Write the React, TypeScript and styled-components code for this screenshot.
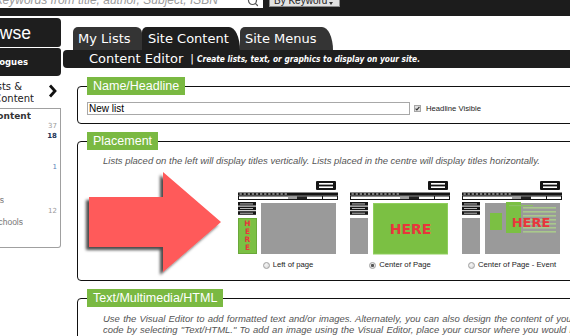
import React from 'react';
import styled, { createGlobalStyle } from 'styled-components';
import { Search } from 'lucide-react';

const GlobalStyle = createGlobalStyle`
  html, body {
    margin: 0;
    padding: 0;
    background: #fff;
  }
  body {
    font-family: 'Liberation Sans', Arial, sans-serif;
  }
`;

const Page = styled.div`
  width: 570px;
  height: 336px;
  overflow: hidden;
  display: flex;
  flex-direction: column;
  background: #fff;
`;

/* ---------- top search strip ---------- */

const TopBar = styled.header`
  height: 16px;
  flex-shrink: 0;
  background: #1c1c1c;
  display: flex;
  align-items: flex-start;
  overflow: hidden;
`;

const SearchField = styled.div`
  width: 263px;
  height: 8px;
  flex-shrink: 0;
  box-sizing: border-box;
  padding-right: 4px;
  background: #fff;
  display: flex;
  justify-content: flex-end;
  align-items: flex-end;
  overflow: hidden;
`;

const SearchText = styled.span`
  font: italic 12px/12px 'Liberation Sans', Arial, sans-serif;
  color: #9a9a9a;
  white-space: nowrap;
  margin-bottom: 2px;
`;

const SearchIcon = styled(Search)`
  flex-shrink: 0;
  margin: 0 0 1.5px 29px;
  color: #555;
`;

const KeywordSelect = styled.div`
  width: 71px;
  height: 7px;
  margin-left: 6px;
  box-sizing: border-box;
  padding-left: 4px;
  background: #e2e2e2;
  border: 1px solid #8a8a8a;
  border-top: none;
  display: flex;
  align-items: flex-end;
  overflow: hidden;
`;

const KeywordText = styled.span`
  font: 10px/10px 'Liberation Sans', Arial, sans-serif;
  color: #222;
  white-space: nowrap;
  margin-bottom: 0.5px;
`;

const Caret = styled.span`
  margin: 0 6px 1px auto;
  width: 0;
  height: 0;
  border-left: 2px solid transparent;
  border-right: 2px solid transparent;
  border-top: 3px solid #333;
`;

/* ---------- body ---------- */

const Body = styled.div`
  flex: 1;
  min-height: 0;
  display: flex;
  gap: 2px;
  margin-top: 2px;
`;

const Sidebar = styled.aside`
  width: 61px;
  flex-shrink: 0;
  display: flex;
  flex-direction: column;
`;

/* text in the sidebar runs off the left edge of the window; each line is
   right-aligned to where it ends in the screenshot */
const ClipLine = styled.div<{ $end: number }>`
  width: ${p => p.$end}px;
  flex-shrink: 0;
  display: flex;
  justify-content: flex-end;
  overflow: hidden;
  white-space: nowrap;
`;

const NavBlock = styled.div<{ $h: number; $radius: string; $gap?: number }>`
  height: ${p => p.$h}px;
  margin-top: ${p => p.$gap ?? 0}px;
  background: #1e1e1e;
  border-radius: ${p => p.$radius};
  color: #fff;
  display: flex;
  align-items: center;
`;

const BrowseLabel = styled.span`
  font: 17.5px/20px 'Liberation Sans', Arial, sans-serif;
`;

const CatalogueLabel = styled.span`
  font: bold 8.5px/12px 'DejaVu Sans', Verdana, sans-serif;
`;

const SectionToggle = styled.div`
  display: flex;
  align-items: flex-start;
  margin-top: 5px;
  height: 24px;
`;

const ToggleText = styled.div`
  width: 47px;
  display: flex;
  flex-direction: column;
  font: 10px/12px 'DejaVu Sans', Verdana, sans-serif;
  color: #222;
`;

const Chevron = styled.svg`
  margin-top: 3px;
  flex-shrink: 0;
`;

const ListBox = styled.div`
  margin-top: 3px;
  height: 140px;
  box-sizing: border-box;
  border: 1px solid #a0a0a0;
  border-left: none;
  border-radius: 0 0 3px 0;
  padding-top: 1px;
  display: flex;
  flex-direction: column;
`;

const ListHeader = styled.div`
  height: 12px;
  display: flex;
  align-items: center;
  font: bold 9px/12px 'DejaVu Sans', Verdana, sans-serif;
  color: #333;
`;

const ListRow = styled.div<{ $h: number }>`
  height: ${p => p.$h}px;
  display: flex;
  align-items: center;
  padding-right: 3px;
`;

const RowLabel = styled.span`
  font: 8.5px/11px 'Liberation Sans', Arial, sans-serif;
  color: #777;
`;

const Count = styled.span<{ $tone: 'gray' | 'bold' | 'blue' }>`
  margin-left: auto;
  font: ${p => (p.$tone === 'bold' ? 'bold' : 'normal')} 7px/9px 'DejaVu Sans', Verdana, sans-serif;
  color: ${p => (p.$tone === 'bold' ? '#1d3557' : p.$tone === 'blue' ? '#5b82b8' : '#9a9a9a')};
`;

/* ---------- main column ---------- */

const Main = styled.main`
  flex: 1;
  min-width: 0;
  display: flex;
  flex-direction: column;
  padding-top: 9px;
  overflow: hidden;
`;

const TabRow = styled.nav`
  display: flex;
  height: 23px;
  padding-left: 10px;
  flex-shrink: 0;
`;

const Tab = styled.div<{ $active?: boolean; $width: number; $slant?: boolean }>`
  width: ${p => p.$width}px;
  height: 23px;
  box-sizing: border-box;
  padding-left: ${p => (p.$active ? 6 : 5)}px;
  background: ${p => (p.$active ? '#1e1e1e' : '#343434')};
  color: #fff;
  font: 13px/23px 'DejaVu Sans', Verdana, sans-serif;
  white-space: nowrap;
  border-radius: ${p => (p.$slant ? '5px 11px 0 0 / 5px 23px 0 0' : '5px 6px 0 0')};
`;

const EditorBar = styled.div`
  height: 18px;
  flex-shrink: 0;
  background: #1e1e1e;
  border-radius: 4px 0 0 4px;
  padding-left: 26px;
  display: flex;
  align-items: center;
  color: #fff;
  white-space: nowrap;
`;

const EditorTitle = styled.span`
  font: 13px/18px 'DejaVu Sans', Verdana, sans-serif;
`;

const Divider = styled.span`
  font: 11px/18px 'DejaVu Sans', Verdana, sans-serif;
  margin: 0 3px 0 7px;
`;

const EditorHint = styled.span`
  font: italic bold 8.3px/18px 'DejaVu Sans Condensed', 'DejaVu Sans', Verdana, sans-serif;
`;

const Fieldset = styled.fieldset<{ $mt: number; $pb: number }>`
  margin: ${p => p.$mt}px 0 0 14px;
  padding: 0 9px ${p => p.$pb}px;
  width: 560px;
  min-width: 0;
  flex-shrink: 0;
  box-sizing: border-box;
  border: 1px solid #111;
  border-radius: 4px;
`;

const Legend = styled.legend`
  height: 18px;
  margin: 0;
  padding: 0 6px;
  box-sizing: border-box;
  background: #7ab942;
  color: #fff;
  font: 12.5px/18px 'Liberation Sans', Arial, sans-serif;
`;

const NameRow = styled.div`
  margin-top: 7px;
  display: flex;
  align-items: center;
`;

const TextInput = styled.div`
  width: 323px;
  height: 13px;
  box-sizing: border-box;
  border: 1px solid #a8a8a8;
  padding-left: 1px;
  font: 10px/11px 'Liberation Sans', Arial, sans-serif;
  color: #000;
`;

const CheckBox = styled.span`
  width: 7px;
  height: 7px;
  margin-left: 4px;
  box-sizing: border-box;
  border: 1px solid #a5a5a5;
  background: #dedede;
  display: flex;
  align-items: center;
  justify-content: center;
`;

const SmallLabel = styled.span`
  margin-left: 5px;
  font: 7.7px/10px 'Liberation Sans', Arial, sans-serif;
  color: #222;
  white-space: nowrap;
`;

const Hint = styled.p<{ $mt: number }>`
  margin: ${p => p.$mt}px 0 0;
  padding-left: 16px;
  font: italic 9.5px/12px 'Liberation Sans', Arial, sans-serif;
  color: #555;
  white-space: nowrap;
`;

const LongHint = styled(Hint)`
  line-height: 10.5px;
  word-spacing: 0.6px;
`;

const PlacementRow = styled.div`
  margin-top: 3px;
  height: 106px;
  display: flex;
  align-items: flex-start;
`;

const ArrowArt = styled.svg`
  flex-shrink: 0;
  margin-right: 6px;
  overflow: visible;
`;

const Choices = styled.div`
  display: flex;
  gap: 12px;
`;

const Choice = styled.label`
  width: 100px;
  padding-top: 11px;
  display: flex;
  flex-direction: column;
  align-items: center;
`;

const ChoiceCaption = styled.span`
  margin-top: 5px;
  height: 10px;
  display: flex;
  align-items: center;
  gap: 3px;
  font: 7.7px/10px 'Liberation Sans', Arial, sans-serif;
  color: #222;
  white-space: nowrap;
`;

const Radio = styled.span<{ $checked?: boolean }>`
  width: 7px;
  height: 7px;
  box-sizing: border-box;
  border-radius: 50%;
  border: 1px solid #a0a0a0;
  background: ${p =>
    p.$checked
      ? 'radial-gradient(circle, #555 0 1.3px, #e6e6e6 1.8px)'
      : 'radial-gradient(circle at 40% 35%, #f6f6f6, #d2d2d2)'};
`;

/* ---------- drawings ---------- */

type Variant = 'left' | 'center' | 'event';

const GREEN = '#7bc043';
const GREY = '#9a9a9a';
const RED = '#e8363c';

const Thumb: React.FC<{ variant: Variant }> = ({ variant }) => {
  const dashes = Array.from({ length: 12 }, (_, i) => i);
  return (
    <svg width={100} height={74} viewBox="0 0 100 74">
      <rect x={78} y={0} width={20} height={9} rx={1} fill="#151515" />
      <rect x={81} y={2} width={14} height={1.6} fill="#fff" />
      <rect x={81} y={5.4} width={14} height={1.6} fill="#fff" />

      <rect x={0} y={11.5} width={100} height={3} fill="#151515" />
      {dashes.map(i => (
        <rect key={i} x={1.5 + i * 4.1} y={12.3} width={2.3} height={1.4} fill="#a8a8a8" />
      ))}
      <rect x={0.5} y={15} width={99} height={3.5} fill="#fff" stroke="#151515" strokeWidth={1} />
      <rect x={50} y={15.5} width={9} height={2.5} fill="#a0a0a0" />
      <rect x={59} y={15.5} width={10} height={2.5} fill="#222" />
      <rect x={84} y={15} width={1} height={3.5} fill="#151515" />

      <rect x={0} y={21} width={18} height={3.6} fill="#151515" />
      <rect x={0} y={25.6} width={18} height={3.6} fill="#151515" />
      <rect x={0} y={30.2} width={18} height={3.6} fill="#151515" />
      <rect x={2} y={22.6} width={13} height={0.7} fill="#fff" />
      <rect x={2} y={27.2} width={13} height={0.7} fill="#fff" />
      <rect x={2} y={31.8} width={13} height={0.7} fill="#fff" />

      {variant === 'left' ? (
        <g>
          <rect x={0.5} y={37.5} width={18} height={35} fill={GREEN} stroke="#6aa83a" />
          {['H', 'E', 'R', 'E'].map((ch, i) => (
            <text
              key={i}
              x={9.5}
              y={45 + i * 8}
              textAnchor="middle"
              fontFamily="'DejaVu Sans', Verdana, sans-serif"
              fontWeight="bold"
              fontSize={7.5}
              fill={RED}
            >
              {ch}
            </text>
          ))}
        </g>
      ) : (
        <rect x={0} y={37} width={18} height={36} fill={GREY} />
      )}

      {variant === 'center' ? (
        <g>
          <rect x={23.5} y={22.5} width={74} height={50.5} fill={GREEN} stroke="#8fce5c" />
          <text
            x={60.5}
            y={52.5}
            textAnchor="middle"
            fontFamily="'DejaVu Sans', Verdana, sans-serif"
            fontWeight="bold"
            fontSize={14}
            fill={RED}
          >
            HERE
          </text>
        </g>
      ) : (
        <rect x={23} y={22} width={75} height={51} fill={GREY} />
      )}

      {variant === 'event' && (
        <g>
          <rect x={28} y={32} width={12} height={17} fill={GREEN} />
          <rect x={44} y={21} width={15} height={31} fill={GREEN} />
          {[26, 30, 34, 38, 42, 46, 50].map(y => (
            <rect key={y} x={61} y={y} width={33} height={1.6} fill="#a9c98c" />
          ))}
          <rect x={47} y={24} width={24} height={1.2} fill="#8cc064" />
          <text
            x={69}
            y={46}
            textAnchor="middle"
            fontFamily="'DejaVu Sans', Verdana, sans-serif"
            fontWeight="bold"
            fontSize={13}
            fill={RED}
          >
            HERE
          </text>
        </g>
      )}
    </svg>
  );
};

const BigArrow: React.FC = () => (
  <ArrowArt width={145} height={106} viewBox="0 0 145 106">
    <defs>
      <filter id="arrowShadow" x="-20%" y="-20%" width="140%" height="140%">
        <feDropShadow dx={-3} dy={3} stdDeviation={1.4} floodColor="#000" floodOpacity={0.7} />
      </filter>
    </defs>
    <polygon
      points="2,27 76,27 76,2 134,52 76,102 76,77 2,77"
      fill="#ff5a5a"
      filter="url(#arrowShadow)"
    />
  </ArrowArt>
);

/* ---------- data ---------- */

const sideRows: { h: number; label?: string; end?: number; count?: string; tone?: 'gray' | 'bold' | 'blue' }[] = [
  { h: 9, count: '37', tone: 'gray' },
  { h: 10, count: '18', tone: 'bold' },
  { h: 10 },
  { h: 11 },
  { h: 10, count: '1', tone: 'blue' },
  { h: 11 },
  { h: 12 },
  { h: 11, label: 'New Releases', end: 4 },
  { h: 11, count: '12', tone: 'gray' },
  { h: 11, label: 'Local Schools', end: 23 },
];

const choices: { variant: Variant; label: string; checked?: boolean }[] = [
  { variant: 'left', label: 'Left of page' },
  { variant: 'center', label: 'Center of Page', checked: true },
  { variant: 'event', label: 'Center of Page - Event' },
];

export default function App() {
  return (
    <>
      <GlobalStyle />
      <Page>
        <TopBar>
          <SearchField>
            <SearchText>Search using keywords from title, author, Subject, ISBN</SearchText>
            <SearchIcon size={12} strokeWidth={2.4} />
          </SearchField>
          <KeywordSelect>
            <KeywordText>By Keyword</KeywordText>
            <Caret />
          </KeywordSelect>
        </TopBar>

        <Body>
          <Sidebar>
            <NavBlock $h={29} $radius="0 4px 3px 0">
              <ClipLine $end={31}>
                <BrowseLabel>Browse</BrowseLabel>
              </ClipLine>
            </NavBlock>
            <NavBlock $h={28} $radius="0 3px 4px 0" $gap={1}>
              <ClipLine $end={28}>
                <CatalogueLabel>Catalogues</CatalogueLabel>
              </ClipLine>
            </NavBlock>

            <SectionToggle>
              <ToggleText>
                <ClipLine $end={22}>Lists &amp;</ClipLine>
                <ClipLine $end={34}>Site Content</ClipLine>
              </ToggleText>
              <Chevron width={10} height={14} viewBox="0 0 10 14">
                <polyline points="3,1.5 8,7 3,12.5" fill="none" stroke="#111" strokeWidth={2.8} />
              </Chevron>
            </SectionToggle>

            <ListBox>
              <ListHeader>
                <ClipLine $end={31}>Site Content</ClipLine>
              </ListHeader>
              {sideRows.map((r, i) => (
                <ListRow key={i} $h={r.h}>
                  {r.label && (
                    <ClipLine $end={r.end ?? 0}>
                      <RowLabel>{r.label}</RowLabel>
                    </ClipLine>
                  )}
                  {r.count && <Count $tone={r.tone ?? 'gray'}>{r.count}</Count>}
                </ListRow>
              ))}
            </ListBox>
          </Sidebar>

          <Main>
            <TabRow>
              <Tab $width={69}>My Lists</Tab>
              <Tab $width={98} $active $slant>
                Site Content
              </Tab>
              <Tab $width={93} $slant>
                Site Menus
              </Tab>
            </TabRow>
            <EditorBar>
              <EditorTitle>Content Editor</EditorTitle>
              <Divider>|</Divider>
              <EditorHint>Create lists, text, or graphics to display on your site.</EditorHint>
            </EditorBar>

            <Fieldset $mt={9} $pb={8}>
              <Legend>Name/Headline</Legend>
              <NameRow>
                <TextInput>New list</TextInput>
                <CheckBox>
                  <svg width={5} height={5} viewBox="0 0 5 5">
                    <polyline points="0.6,2.6 1.9,3.9 4.4,0.8" fill="none" stroke="#333" strokeWidth={1.1} />
                  </svg>
                </CheckBox>
                <SmallLabel>Headline Visible</SmallLabel>
              </NameRow>
            </Fieldset>

            <Fieldset $mt={8} $pb={4}>
              <Legend>Placement</Legend>
              <Hint $mt={5}>
                Lists placed on the left will display titles vertically. Lists placed in the centre will display titles
                horizontally.
              </Hint>
              <PlacementRow>
                <BigArrow />
                <Choices>
                  {choices.map(c => (
                    <Choice key={c.variant}>
                      <Thumb variant={c.variant} />
                      <ChoiceCaption>
                        <Radio $checked={c.checked} />
                        {c.label}
                      </ChoiceCaption>
                    </Choice>
                  ))}
                </Choices>
              </PlacementRow>
            </Fieldset>

            <Fieldset $mt={8} $pb={8}>
              <Legend>Text/Multimedia/HTML</Legend>
              <LongHint $mt={7}>
                Use the Visual Editor to add formatted text and/or images. Alternately, you can also design the content of
                your Page using HTML
                <br />
                code by selecting "Text/HTML." To add an image using the Visual Editor, place your cursor where you would like
                <br />
                the image to appear and click the "Insert/Edit Image" icon in the toolbar.
              </LongHint>
            </Fieldset>
          </Main>
        </Body>
      </Page>
    </>
  );
}
